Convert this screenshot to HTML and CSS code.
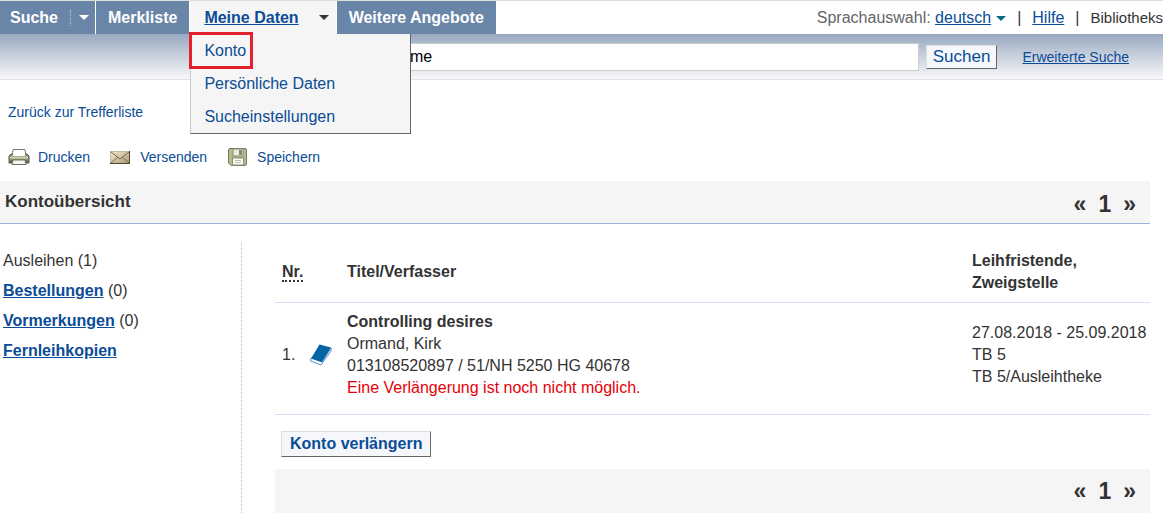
FILE: index.html
```html
<!DOCTYPE html>
<html lang="de">

<head>
    <meta charset="UTF-8">
    <meta name="viewport" content="width=device-width, initial-scale=1.0">
    <title>Kontoübersicht</title>
    <link rel="stylesheet" href="styles.css">
</head>

<body>
    <header class="topbar">
        <nav class="main-nav">
            <div class="nav-item nav-split">
                <a href="#">Suche</a>
                <button class="nav-toggle" type="button" aria-label="Suche aufklappen"><span class="caret"></span></button>
            </div>
            <div class="nav-item"><a href="#">Merkliste</a></div>
            <div class="nav-item nav-open">
                <a href="#">Meine Daten</a>
                <span class="caret"></span>
                <ul class="submenu">
                    <li><a class="marked" href="#">Konto</a></li>
                    <li><a href="#">Persönliche Daten</a></li>
                    <li><a href="#">Sucheinstellungen</a></li>
                </ul>
            </div>
            <div class="nav-item"><a href="#">Weitere Angebote</a></div>
        </nav>
        <div class="meta-nav">
            <span class="lang">Sprachauswahl: <a href="#">deutsch</a><span class="caret"></span></span>
            <span>|</span>
            <a href="#">Hilfe</a>
            <span>|</span>
            <span class="library">Bibliotheks</span>
        </div>
    </header>

    <form class="search-band" action="#">
        <input class="search-field" type="text" value="me" aria-label="Suchbegriff">
        <button class="btn btn-search" type="submit">Suchen</button>
        <a class="advanced" href="#">Erweiterte Suche</a>
    </form>

    <main class="page">
        <a class="back-link" href="#">Zurück zur Trefferliste</a>

        <div class="tools">
            <a class="tool" href="#">
                <svg width="22" height="18" viewBox="0 0 22 18" aria-hidden="true">
                    <path d="M1 8 L3 6 H19 L21 8 V15 H1 Z" fill="#8f9177" stroke="#56574a"/>
                    <path d="M5 1.500 H17 L18 8.500 H4 Z" fill="#fff" stroke="#77796b"/>
                    <path d="M2 9.500 H20" stroke="#d3d6ae" stroke-width="2"/>
                    <path d="M2 13.500 H20" stroke="#5c5d4e" stroke-width="2"/>
                    <path d="M5 12 H17 L18 16.500 H4 Z" fill="#f7f7f2" stroke="#6b6c5c"/>
                </svg>
                Drucken
            </a>
            <a class="tool" href="#">
                <svg width="22" height="18" viewBox="0 0 22 18" aria-hidden="true">
                    <defs>
                        <linearGradient id="paper" x1="0" y1="0" x2="1" y2="1">
                            <stop offset="0" stop-color="#f6efdc"/>
                            <stop offset="1" stop-color="#a9946e"/>
                        </linearGradient>
                    </defs>
                    <rect x="0" y="3" width="20" height="13" fill="url(#paper)"/>
                    <path d="M0 3.500 H20 M0.500 3 V16" stroke="#c4bba6"/>
                    <path d="M19.500 3 V15.500 H0" fill="none" stroke="#54452f"/>
                    <path d="M1 15 L8 9 M19 15 L12 9" stroke="#7d6c4d" fill="none"/>
                    <path d="M1 4 L10 11 L19 4" stroke="#75654a" fill="none"/>
                </svg>
                Versenden
            </a>
            <a class="tool" href="#">
                <svg width="22" height="20" viewBox="0 0 22 20" aria-hidden="true">
                    <path d="M3 1.500 H18 Q19.500 1.500 19.500 3 V17 Q19.500 18.500 18 18.500 H4 L1.500 16 V3 Q1.500 1.500 3 1.500 Z" fill="#b4ba8c" stroke="#777a62"/>
                    <rect x="6" y="2" width="10" height="7" fill="#e9ebdc" stroke="#8b8e74"/>
                    <rect x="12" y="3" width="3" height="5" fill="#858a62"/>
                    <rect x="5.500" y="11" width="11" height="7" fill="#fafaf6" stroke="#8b8e74"/>
                    <path d="M8 13.500 H14 M8 15.500 H14" stroke="#bdbfae"/>
                </svg>
                Speichern
            </a>
        </div>

        <div class="title-bar">
            <h1>Kontoübersicht</h1>
            <div class="pager"><span>«</span><span>1</span><span>»</span></div>
        </div>

        <div class="columns">
            <ul class="account-nav">
                <li>Ausleihen (1)</li>
                <li><a href="#">Bestellungen</a> (0)</li>
                <li><a href="#">Vormerkungen</a> (0)</li>
                <li><a href="#">Fernleihkopien</a></li>
            </ul>

            <section class="loans">
                <table class="loan-table">
                    <thead>
                        <tr>
                            <th class="col-nr"><abbr title="Nummer">Nr.</abbr></th>
                            <th class="col-icon"></th>
                            <th>Titel/Verfasser</th>
                            <th class="col-due">Leihfristende,<br>Zweigstelle</th>
                        </tr>
                    </thead>
                    <tbody>
                        <tr>
                            <td class="col-nr">1.</td>
                            <td class="col-icon">
                                <svg width="24" height="24" viewBox="0 0 24 24" aria-hidden="true">
                                    <path d="M2 15 L1.500 18 L12 22 L22 8 V5 L13 19 Z" fill="#fff" stroke="#5b93c3"/>
                                    <path d="M10.500 1.500 L22 4.500 L13 19 L2 15.500 Z" fill="#0564a5"/>
                                </svg>
                            </td>
                            <td>
                                <strong>Controlling desires</strong><br>
                                Ormand, Kirk<br>
                                013108520897 / 51/NH 5250 HG 40678<br>
                                <span class="warning">Eine Verlängerung ist noch nicht möglich.</span>
                            </td>
                            <td class="col-due">27.08.2018 - 25.09.2018<br>TB 5<br>TB 5/Ausleihtheke</td>
                        </tr>
                    </tbody>
                </table>
                <button class="btn btn-renew" type="button">Konto verlängern</button>
                <div class="bottom-bar">
                    <div class="pager"><span>«</span><span>1</span><span>»</span></div>
                </div>
            </section>
        </div>
    </main>
</body>

</html>
```

FILE: styles.css
```css
* {
    margin: 0;
    padding: 0;
    box-sizing: border-box;
}

body {
    font-family: "Liberation Sans", Arial, sans-serif;
    font-size: 16px;
    line-height: 22px;
    color: #333;
    background: #fff;
    overflow-x: hidden;
}

a {
    color: #0a4c97;
}

ul {
    list-style: none;
}

/* top bar */
.topbar {
    display: flex;
    justify-content: space-between;
    border-top: 1px solid #dcdcdc;
    white-space: nowrap;
}

.main-nav {
    display: flex;
    gap: 1px;
}

.nav-item {
    position: relative;
    display: flex;
    align-items: center;
    height: 33px;
    padding: 0 12px;
    background: #6985a7;
    color: #fff;
    font-weight: bold;
}

.nav-item > a {
    color: #fff;
    text-decoration: none;
}

.nav-split {
    padding: 0 0 0 10px;
    gap: 12px;
}

.nav-toggle {
    height: 16px;
    padding: 0 6px 0 8px;
    border: none;
    border-left: 1px dotted #b9c8da;
    background: none;
    color: #fff;
    display: flex;
    align-items: center;
}

.caret {
    display: inline-block;
    border: 5px solid transparent;
    border-top-color: currentColor;
    border-bottom: none;
}

.nav-item.nav-open {
    gap: 20px;
    padding: 0 7px 0 14px;
    background: #f5f5f5;
    color: #333;
}

.nav-open > a {
    color: #0a4c97;
    text-decoration: underline;
}

.submenu {
    position: absolute;
    z-index: 2;
    top: 33px;
    left: 0;
    width: 221px;
    background: #f5f5f5;
    border: 1px solid #666;
    border-top: none;
    border-left-color: #ccc;
    font-weight: normal;
}

.submenu li {
    height: 33px;
}

.submenu a {
    display: inline-block;
    padding: 0 5px 0 13px;
    line-height: 33px;
    text-decoration: none;
}

.submenu .marked {
    outline: 3px solid #e3202b;
    outline-offset: -1px;
}

.meta-nav {
    display: flex;
    align-items: center;
    gap: 11px;
}

.lang {
    color: #666;
}

.lang .caret {
    margin-left: 5px;
    color: #0b6a80;
    vertical-align: 2px;
}

.library {
    font-size: 15px;
}

/* search */
.search-band {
    display: flex;
    align-items: center;
    gap: 7px;
    height: 46px;
    padding: 0 34px 0 400px;
    background: linear-gradient(#98a9c0, #c9d1de 50%, #f8f8fa);
    border-bottom: 1px solid #dfe1e6;
}

.search-field {
    flex: 1;
    min-width: 0;
    height: 28px;
    padding: 0 9px;
    border: 1px solid #ccc;
    background: #fff;
    color: #000;
    font: inherit;
}

.btn {
    border: 1px solid #666;
    border-top-color: #ddd;
    border-left-color: #ddd;
    background: #f5f7fa;
    color: #0a4c97;
    font: inherit;
}

.btn-search {
    height: 24px;
    padding: 0 6px;
    font-size: 17px;
}

.advanced {
    margin-left: 18px;
    font-size: 14px;
}

/* page */
.page {
    padding-right: 13px;
}

.back-link {
    display: block;
    padding: 21px 8px 0;
    font-size: 14px;
    text-decoration: none;
}

.tools {
    display: flex;
    gap: 20px;
    padding: 23px 8px 13px;
}

.tool {
    display: flex;
    align-items: center;
    gap: 8px;
    height: 22px;
    font-size: 14px;
    text-decoration: none;
}

.title-bar {
    display: flex;
    justify-content: space-between;
    height: 43px;
    padding-left: 5px;
    background: #f5f5f5;
    border-bottom: 1px solid #9fb1d8;
}

.title-bar h1 {
    font-size: 17px;
    line-height: 42px;
}

.pager {
    display: flex;
    gap: 12px;
    padding-right: 14px;
    font-size: 23px;
    font-weight: bold;
    line-height: 46px;
}

.columns {
    display: flex;
    padding-top: 18px;
}

.account-nav {
    width: 242px;
    flex: none;
    padding: 4px 3px 0;
    line-height: 30px;
    border-right: 1px dotted #bbb;
}

.account-nav a {
    font-weight: bold;
}

.loans {
    flex: 1;
    margin-left: 33px;
}

.loan-table {
    width: 100%;
    border-collapse: collapse;
}

.loan-table th,
.loan-table td {
    padding: 8px 0;
    border-bottom: 1px solid #dcdcf0;
    text-align: left;
    vertical-align: middle;
}

.loan-table td {
    padding: 8px 0 15px;
}

.loan-table .col-nr {
    width: 34px;
    padding-left: 7px;
}

.loan-table .col-icon {
    width: 38px;
}

.loan-table .col-due {
    width: 178px;
}

.loan-table abbr {
    text-decoration: none;
    border-bottom: 2px dotted #333;
}

.col-icon svg {
    display: block;
}

.warning {
    color: #e60008;
}

.btn-renew {
    display: block;
    height: 26px;
    margin: 16px 6px 12px;
    padding: 0 8px;
    font-weight: bold;
}

.bottom-bar {
    display: flex;
    justify-content: flex-end;
    height: 44px;
    background: #f5f5f5;
}

.bottom-bar .pager {
    line-height: 44px;
}
```
